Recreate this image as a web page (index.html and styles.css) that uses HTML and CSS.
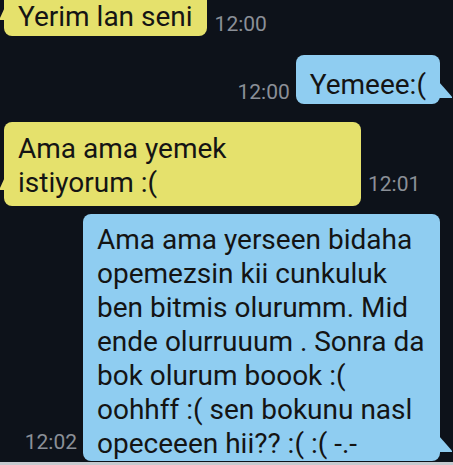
FILE: index.html
```html
<!DOCTYPE html>
<html>
<head>
<meta charset="utf-8">
<link rel="stylesheet" href="styles.css">
</head>
<body>
	<div class="screen">
		<div class="row in r1">
			<div class="bubble">Yerim lan seni</div>
			<span class="time">12:00</span>
		</div>
		<div class="row out r2">
			<span class="time">12:00</span>
			<div class="bubble">Yemeee:(</div>
		</div>
		<div class="row in r3">
			<div class="bubble wide">Ama ama yemek<br>istiyorum :(</div>
			<span class="time">12:01</span>
		</div>
		<div class="row out r4">
			<span class="time">12:02</span>
			<div class="bubble wide">Ama ama yerseen bidaha<br>opemezsin kii cunkuluk<br>ben bitmis olurumm. Mid<br>ende olurruuum . Sonra da<br>bok olurum boook :(<br>oohhff :( sen bokunu nasl<br>opeceeen hii?? :( :( -.-</div>
		</div>
		<div class="strip"></div>
	</div>
</body>
</html>
```

FILE: styles.css
```css
html,body{margin:0;background:#0d121a}
.screen {
	width:453px;height:465px;overflow:hidden;
	display:flex;flex-direction:column;
}
.row {
	display:flex;align-items:flex-end;
}
.row.in {
	justify-content:flex-start;padding-left:4px;
}
.row.out {
	justify-content:flex-end;padding-right:13px;
}
.bubble {
	position:relative;
	font:28px/34px Roboto,"Liberation Sans",sans-serif;
	color:#141414;
	padding:13px 14px 2px;
	border-radius:8px;
	white-space:nowrap;
}
.in .bubble {background:#e5e16c}
.out .bubble {background:#8fcdf1}
.bubble.wide {
	width:357px;box-sizing:border-box;
}
.in .bubble:before {
	content:'';position:absolute;
	left:-4px;bottom:16px;width:5px;height:13px;
	background:#e5e16c;
	clip-path:polygon(100% 0,0 85%,0 100%,100% 100%);
}
.out .bubble:before {
	content:'';position:absolute;
	right:-12px;bottom:6px;width:13px;height:16px;
	background:#8fcdf1;
	clip-path:polygon(0 0,100% 92%,100% 100%,0 100%);
}
.time {
	font:21px/1 Roboto,"Liberation Sans",sans-serif;
	color:#8a8f97;
	margin:0 8px 1px;
}
.out .time {margin:0 6px 1px 0}
/* first bubble is scrolled past the top edge */
.r1 .bubble {padding-top:0;padding-bottom:2px;border-radius:0 0 8px 8px}
.r2 {margin-top:19px}
.r3 {margin-top:18px}
.r3 .bubble {padding:10px 14px 6px}
.r3 .time {margin:0 0 11px 7px}
.r4 {margin-top:8px}
.r4 .bubble {padding:9px 10px 0 14px}
.r4 .bubble:before {bottom:9px;height:16px}
.r4 .time {margin-bottom:8px}
.strip {
	margin-top:auto;height:3px;background:#c6cacf;
}
```
